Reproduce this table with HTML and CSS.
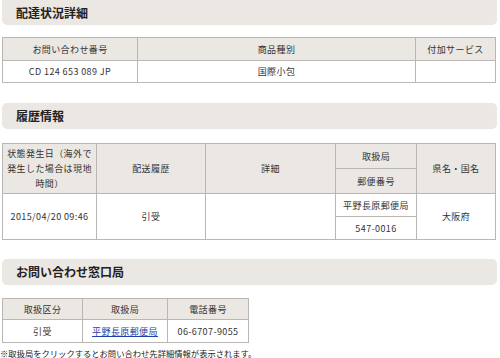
FILE: index.html
```html
<!DOCTYPE html>
<html lang="ja">
<head>
<meta charset="utf-8">
<link rel="stylesheet" href="styles.css">
</head>
<body>
<div class="page">
  <h2 class="sec first">配達状況詳細</h2>
  <table class="tbl t1">
    <colgroup><col class="c135"><col class="c278"><col></colgroup>
    <tr class="hd r23"><th>お問い合わせ番号</th><th>商品種別</th><th>付加サービス</th></tr>
    <tr class="r22"><td>CD 124 653 089 JP</td><td>国際小包</td><td></td></tr>
  </table>

  <h2 class="sec s2">履歴情報</h2>
  <table class="tbl t2">
    <colgroup><col class="c94"><col class="c109"><col class="c130"><col class="c81"><col></colgroup>
    <tr class="hd r25"><th rowspan="2" class="wrap">状態発生日（海外で発生した場合は現地時間）</th><th rowspan="2">配送履歴</th><th rowspan="2">詳細</th><th>取扱局</th><th rowspan="2">県名・国名</th></tr>
    <tr class="hd r25"><th>郵便番号</th></tr>
    <tr class="r23"><td rowspan="2">2015/04/20 09:46</td><td rowspan="2">引受</td><td rowspan="2"></td><td>平野長原郵便局</td><td rowspan="2">大阪府</td></tr>
    <tr class="r23"><td>547-0016</td></tr>
  </table>

  <h2 class="sec s3">お問い合わせ窓口局</h2>
  <table class="tbl t3">
    <colgroup><col class="c80"><col class="c85"><col></colgroup>
    <tr class="hd r21"><th>取扱区分</th><th>取扱局</th><th>電話番号</th></tr>
    <tr class="r23"><td>引受</td><td><a href="#" class="lnk">平野長原郵便局</a></td><td>06-6707-9055</td></tr>
  </table>
  <p class="note">※取扱局をクリックするとお問い合わせ先詳細情報が表示されます。</p>
</div>
</body>
</html>
```

FILE: styles.css
```css
html, body {
  margin: 0;
  padding: 0;
  background: #ffffff;
}
body {
  font-family: "Noto Sans CJK JP", "DejaVu Sans", sans-serif;
  color: #333333;
  font-size: 9px;
}
.page {
  width: 500px;
  padding: 0 3px 0 2px;
  box-sizing: border-box;
}
.sec {
  margin: 0;
  height: 26px;
  line-height: 26px;
  background: #ebe7e3;
  border-radius: 5px;
  padding-left: 14px;
  font-size: 12px;
  font-weight: bold;
  color: #222222;
  letter-spacing: 0;
}
.sec.first {
  height: 25px;
  line-height: 25px;
  border-radius: 0 0 5px 5px;
  margin-top: 0;
}
.s2 { margin-top: 20px; }
.s3 { margin-top: 19px; }
.tbl {
  border-collapse: collapse;
  table-layout: fixed;
  margin-top: 12px;
}
.t1 { width: 494px; }
.t2 { width: 494px; margin-top: 14px; }
.t3 { width: 247px; margin-top: 13px; }
.tbl th, .tbl td {
  border: 1px solid #b9b6b3;
  padding: 0 2px;
  text-align: center;
  font-weight: normal;
  font-size: 9px;
  color: #333333;
  letter-spacing: 0.4px;
  vertical-align: middle;
}
.tbl th { background: #ebe7e3; }
.wrap { line-height: 15px; padding: 2px 2px; }
.c135 { width: 135px; }
.c278 { width: 278px; }
.c94 { width: 94px; }
.c109 { width: 109px; }
.c130 { width: 130px; }
.c81 { width: 81px; }
.c80 { width: 80px; }
.c85 { width: 85px; }
.r21 { height: 21px; }
.r22 { height: 22px; }
.r23 { height: 23px; }
.r25 { height: 25px; }
.lnk { color: #1f3fa8; text-decoration: underline; }
.note {
  margin: 4px 0 0 -2px;
  font-size: 8.3px;
  color: #222222;
  white-space: nowrap;
  letter-spacing: 0;
}
```
